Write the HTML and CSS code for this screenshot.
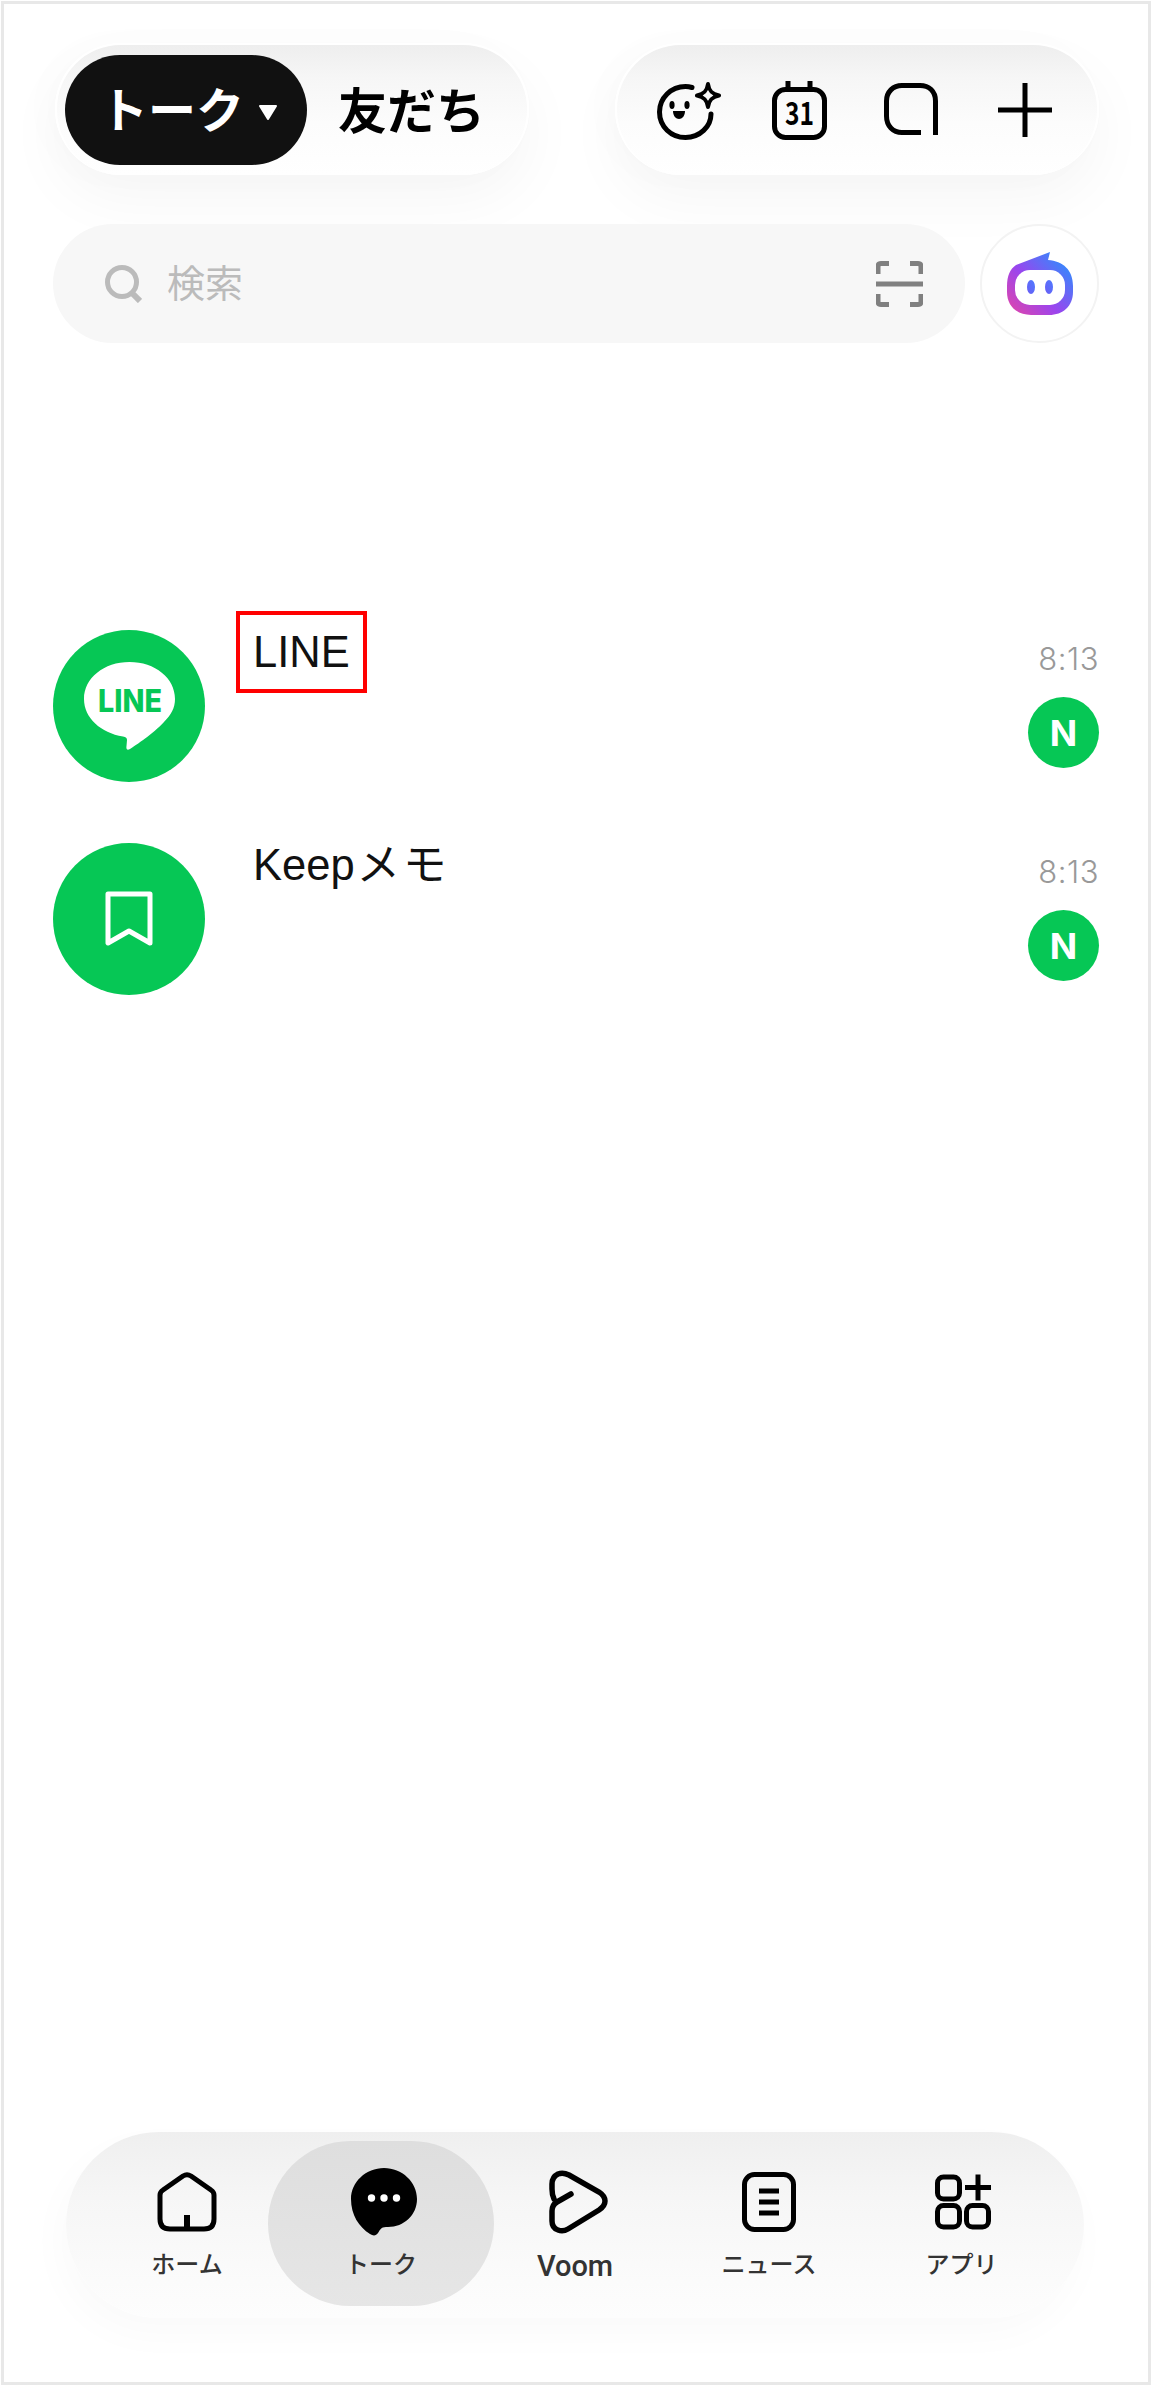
FILE: index.html
```html
<!DOCTYPE html>
<html lang="ja">
<head>
<meta charset="utf-8">
<title>LINE トーク</title>
<link rel="stylesheet" href="styles.css">
</head>
<body>
<div class="frame">
  <header class="topbar">
    <div class="pill pill-tabs">
      <div class="tab-active"><span class="tab-label">トーク</span>
        <svg class="caret" width="20" height="15" viewBox="0 0 20 15"><path d="M2 1H18L10 14Z" fill="#fff" stroke="#fff" stroke-width="2" stroke-linejoin="round"/></svg>
      </div>
      <div class="tab">友だち</div>
    </div>
    <div class="pill pill-actions">
      <svg class="ic-face" width="64" height="59" viewBox="0 0 64 59" fill="none">
        <path d="M35 6.5C32 5.6 30 5.5 28.500 5.500C14 5.500 2.500 17 2.500 31C2.500 45.500 14 56.500 28.500 56.500C43 56.500 54 45.500 54 33" stroke="#000" stroke-width="5" stroke-linecap="round"/>
        <ellipse cx="15" cy="24" rx="2.600" ry="4" fill="#000"/>
        <ellipse cx="30" cy="24" rx="2.600" ry="4" fill="#000"/>
        <path d="M16 30H28C28 35 25 38 22 38C19 38 16 35 16 30Z" fill="#000"/>
        <path d="M51 3C52 10 55 13 62 14.500C55 16 52 19 51 26C50 19 47 16 40 14.500C47 13 50 10 51 3Z" stroke="#000" stroke-width="4" stroke-linejoin="round"/>
      </svg>
      <svg class="ic-cal" width="55" height="59" viewBox="0 0 55 59" fill="none">
        <rect x="2.500" y="8.500" width="50" height="48" rx="11" stroke="#000" stroke-width="5"/>
        <path d="M16 0V8M38 0V8" stroke="#000" stroke-width="5"/>
        <text x="13" y="44" class="cal-num" textLength="29" lengthAdjust="spacingAndGlyphs">31</text>
      </svg>
      <svg class="ic-square" width="54" height="52" viewBox="0 0 54 52" fill="none">
        <path d="M51.500 52V18C51.500 8 45 2.500 36 2.500H18C9 2.500 2.500 9 2.500 18V33C2.500 43 9 49.500 18 49.500H37" stroke="#000" stroke-width="5"/>
      </svg>
      <svg class="ic-plus" width="54" height="54" viewBox="0 0 54 54" fill="none">
        <path d="M27 0V54M0 27H54" stroke="#000" stroke-width="5"/>
      </svg>
    </div>
  </header>

  <div class="search-row">
    <div class="search">
      <svg width="37" height="38" viewBox="0 0 37 38" fill="none">
        <circle cx="17" cy="17" r="14.500" stroke="#bbb" stroke-width="5"/>
        <path d="M26 27L35 36" stroke="#bbb" stroke-width="6"/>
      </svg>
      <span class="search-text">検索</span>
      <svg class="ic-scan" width="47" height="46" viewBox="0 0 47 46" fill="none">
        <path d="M13 2.500H5Q2 2.500 2 5.500V13M34 2.500H42Q45 2.500 45 5.500V13M13 43.500H5Q2 43.500 2 40.500V33M34 43.500H42Q45 43.500 45 40.500V33" stroke="#808080" stroke-width="5"/>
        <path d="M0 23H47" stroke="#808080" stroke-width="5"/>
      </svg>
    </div>
    <div class="ai-btn">
      <svg width="66" height="63" viewBox="0 0 66 63">
        <defs>
          <linearGradient id="aiGrad" x1="1" y1="0.100" x2="0" y2="1">
            <stop offset="0" stop-color="#2196ff"/>
            <stop offset="0.550" stop-color="#9a45ee"/>
            <stop offset="1" stop-color="#e645a5"/>
          </linearGradient>
          <linearGradient id="aiEye" x1="1" y1="0" x2="0" y2="1">
            <stop offset="0" stop-color="#4f7bff"/>
            <stop offset="1" stop-color="#6a5cf5"/>
          </linearGradient>
        </defs>
        <path d="M9 13L43 0L41 8C56 9 66 18 66 34V40C66 54 56 63 42 63H24C10 63 0 54 0 40V34C0 24 3 17 9 13Z" fill="url(#aiGrad)"/>
        <rect x="8" y="18" width="50" height="35" rx="15" fill="#fff"/>
        <ellipse cx="24" cy="35" rx="4" ry="7" fill="url(#aiEye)"/>
        <ellipse cx="42" cy="35" rx="4" ry="7" fill="url(#aiEye)"/>
      </svg>
    </div>
  </div>

  <main class="chats">
    <div class="chat">
      <div class="avatar">
        <svg width="91" height="88" viewBox="0 0 91 88">
          <path d="M45.500 0C71 0 91 16 91 37C91 46 87 53 80 60C69 72 52 83 46 87C43 89 42 87 42.500 84L43 78C43 76 42 75 39 74.500C17 71 0 56 0 37C0 16 20 0 45.500 0Z" fill="#fff"/>
          <text x="14" y="50" class="logo-text" textLength="64" lengthAdjust="spacingAndGlyphs">LINE</text>
        </svg>
      </div>
      <div class="name name-marked">LINE</div>
      <div class="meta">
        <div class="time">8:13</div>
        <div class="badge">N</div>
      </div>
    </div>
    <div class="chat">
      <div class="avatar">
        <svg width="48" height="57" viewBox="0 0 48 57" fill="none">
          <path d="M3 3H45V52L24 40L3 52Z" stroke="#fff" stroke-width="5" stroke-linejoin="round"/>
        </svg>
      </div>
      <div class="name">Keep<span class="name-jp">メモ</span></div>
      <div class="meta">
        <div class="time">8:13</div>
        <div class="badge">N</div>
      </div>
    </div>
  </main>

  <nav class="nav">
    <div class="nav-item">
      <svg class="nav-ic" width="60" height="60" viewBox="0 0 60 60" fill="none">
        <path d="M3 23Q3 20 6 18L26 4Q30 1.500 34 4L54 18Q57 20 57 23V47Q57 57 47 57H13Q3 57 3 47Z" stroke="#000" stroke-width="5" stroke-linejoin="round"/>
        <path d="M30 43V57" stroke="#000" stroke-width="6"/>
      </svg>
      <span class="nav-label">ホーム</span>
    </div>
    <div class="nav-item nav-active">
      <svg class="nav-ic ic-talk" width="66" height="68" viewBox="0 0 66 68">
        <path d="M33 0C51 0 66 14 66 31C66 47 53 59 37 59H35C30 59 29 62 27 65C25 68 22 68 19 66C8 59 0 47 0 31C0 14 15 0 33 0Z" fill="#000"/>
        <circle cx="20.500" cy="30" r="3.700" fill="#fff"/>
        <circle cx="33" cy="30" r="3.700" fill="#fff"/>
        <circle cx="45.500" cy="30" r="3.700" fill="#fff"/>
      </svg>
      <span class="nav-label">トーク</span>
    </div>
    <div class="nav-item">
      <svg class="nav-ic ic-voom" width="59" height="62" viewBox="0 0 59 62" fill="none">
        <path d="M22 23L8 31Q3 34 3 40V50Q3 57 9 59Q14 61 19 58L50 39Q56 35 56 30Q56 25 50 21L20 4Q14 1 9 3Q3 6 3 13V18Q3 24 5 28" stroke="#000" stroke-width="5.500" stroke-linecap="round"/>
      </svg>
      <span class="nav-label nav-latin">Voom</span>
    </div>
    <div class="nav-item">
      <svg class="nav-ic" width="54" height="60" viewBox="0 0 54 60" fill="none">
        <rect x="2.500" y="2.500" width="49" height="55" rx="10" stroke="#000" stroke-width="5"/>
        <path d="M17 19H37M17 30H37M17 41H37" stroke="#000" stroke-width="5"/>
      </svg>
      <span class="nav-label">ニュース</span>
    </div>
    <div class="nav-item">
      <svg class="nav-ic" width="56" height="55" viewBox="0 0 56 55" fill="none">
        <rect x="2.500" y="2.500" width="22" height="22" rx="6" stroke="#000" stroke-width="5"/>
        <rect x="2.500" y="31" width="22" height="21.500" rx="6" stroke="#000" stroke-width="5"/>
        <rect x="31.500" y="31" width="22" height="21.500" rx="6" stroke="#000" stroke-width="5"/>
        <path d="M43 0V26M30 13H56" stroke="#000" stroke-width="5"/>
      </svg>
      <span class="nav-label nav-label-apps">アプリ</span>
    </div>
  </nav>
</div>
</body>
</html>
```
FILE: styles.css
```css
* { box-sizing: border-box; }

html, body {
  margin: 0;
  background: #fff;
}

body {
  padding: 1px;
  font-family: "Liberation Sans", "Noto Sans CJK JP", sans-serif;
}

.frame {
  display: flex;
  flex-direction: column;
  height: 2384px;
  padding: 39px 49px 64px;
  border: 3px solid #e8e8e8;
  background: #fff;
  color: #111;
  overflow: hidden;
}

.topbar {
  display: flex;
  justify-content: space-between;
  align-items: stretch;
  height: 132px;
}

.pill {
  display: flex;
  align-items: center;
  border-radius: 66px;
  border: 2px solid #fff;
  border-bottom: 0;
  background: linear-gradient(180deg, #eeeeee 0%, #f6f6f6 25%, #fcfcfc 60%, #ffffff 100%);
  box-shadow: 0 24px 60px rgba(0, 0, 0, 0.04), -10px 0 40px rgba(0, 0, 0, 0.015);
}

.pill-tabs {
  width: 474px;
  margin-left: 2px;
  padding: 0 8px;
}

.tab-active {
  display: flex;
  align-items: center;
  width: 242px;
  height: 110px;
  padding-left: 35px;
  border-radius: 55px;
  background: #111;
  color: #fff;
  font: 700 48px/1 "Noto Sans CJK JP", sans-serif;
}

.tab-label {
  margin-top: -6px;
}

.caret {
  margin-left: 14px;
  margin-top: 4px;
}

.tab {
  margin-top: -5px;
  margin-left: 31px;
  color: #000;
  font: 700 49px/1 "Noto Sans CJK JP", sans-serif;
}

.pill-actions {
  width: 484px;
  padding-left: 40px;
}

.ic-cal { margin-left: 51px; }
.ic-square { margin-left: 57px; margin-top: -2px; }
.ic-plus { margin-left: 60px; }

.cal-num {
  font: 700 31px "Noto Sans CJK JP", sans-serif;
  fill: #000;
}

.search-row {
  display: flex;
  gap: 15px;
  height: 119px;
  margin-top: 49px;
}

.search {
  display: flex;
  flex: 1;
  align-items: center;
  padding: 0 42px 0 52px;
  border-radius: 60px;
  background: #f7f7f7;
}

.search-text {
  margin-top: -5px;
  margin-left: 25px;
  color: #bbb;
  font: 400 38px/1 "Noto Sans CJK JP", sans-serif;
}

.ic-scan { margin-left: auto; }

.ai-btn {
  display: flex;
  align-items: center;
  justify-content: center;
  width: 119px;
  height: 119px;
  border-radius: 50%;
  border: 2px solid #f3f3f3;
  background: #fff;
}

.chats {
  margin-top: 268px;
}

.chat {
  display: flex;
  align-items: flex-start;
  height: 213px;
}

.avatar {
  display: flex;
  flex: none;
  align-items: center;
  justify-content: center;
  width: 152px;
  height: 152px;
  margin-top: 19px;
  border-radius: 50%;
  background: #06c755;
}

.logo-text {
  font: 800 31px "Inter", sans-serif;
  fill: #06c755;
}

.name {
  margin-left: 31px;
  padding: 0 13px;
  height: 82px;
  border: 4px solid transparent;
  font-size: 43.500px;
  line-height: 74px;
  color: #111;
}

.name-marked {
  border-color: #ff0000;
}

.name-jp {
  margin-left: 2px;
  letter-spacing: 3px;
}

.meta {
  display: flex;
  flex-direction: column;
  align-items: flex-end;
  margin-left: auto;
  padding-top: 30px;
}

.time {
  height: 36px;
  color: #999;
  font: 300 31px/36px "Inter", sans-serif;
  letter-spacing: 0.5px;
}

.badge {
  display: flex;
  align-items: center;
  justify-content: center;
  width: 71px;
  height: 71px;
  margin-top: 20px;
  border-radius: 50%;
  background: #06c755;
  color: #fff;
  font: 700 36px/1 "Inter", sans-serif;
}

.nav {
  display: grid;
  grid-template-columns: repeat(5, 1fr);
  flex: none;
  height: 186px;
  margin: auto 15px 0 13px;
  padding: 9px 24px 12px;
  border-radius: 93px;
  background: linear-gradient(180deg, #efefef 0%, #f6f6f6 35%, #fbfbfb 80%, #fdfdfd 100%);
  box-shadow: -6px 16px 40px rgba(0, 0, 0, 0.025);
}

.nav-item {
  display: flex;
  flex-direction: column;
  align-items: center;
  height: 165px;
  padding-top: 27px;
}

.nav-active {
  margin: 0 -16px;
  border-radius: 83px;
  background: linear-gradient(180deg, #dedede 0%, #e6e6e6 100%);
}

.nav-ic {
  flex: none;
  height: 68px;
}

.ic-talk { margin-left: 5px; }
.ic-voom { margin-left: 7px; }

.nav-label {
  margin-top: 12px;
  color: #333;
  font: 500 24px/30px "Noto Sans CJK JP", sans-serif;
}

.nav-label-apps { margin-left: -3px; }

.nav-latin {
  margin-top: 15px;
  font: 500 29px/30px "Roboto", sans-serif;
}
```
